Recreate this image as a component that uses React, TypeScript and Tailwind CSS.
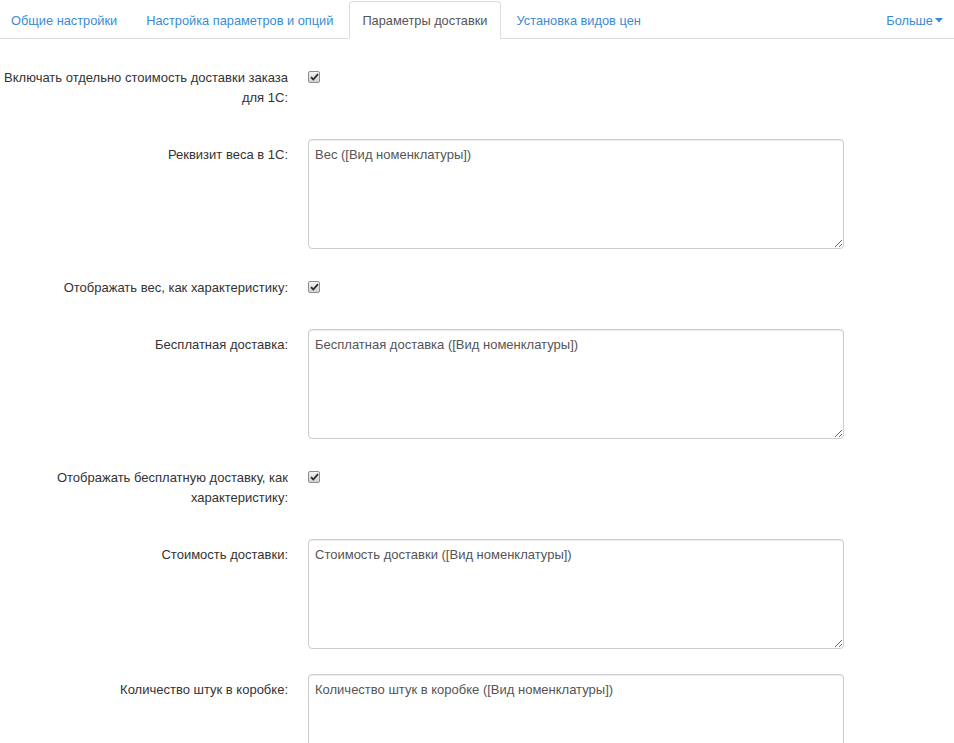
import React from 'react'

const tabs = [
    { title: 'Общие настройки' },
    { title: 'Настройка параметров и опций' },
    { title: 'Параметры доставки', active: true },
    { title: 'Установка видов цен' },
]

function Check() {
    return (
        <span className="mt-[7px] flex h-[12px] w-[12px] items-center justify-center rounded-[2px] border border-[#8e8e8e] bg-gradient-to-b from-[#f4f4f4] to-[#d2d2d2]">
            <svg width="9" height="8" viewBox="0 0 9 8">
                <path d="M1 4.2 L3.3 6.5 L8 1.2" fill="none" stroke="#2a2a2a" strokeWidth="1.8" />
            </svg>
        </span>
    )
}

function CheckRow(props: { label: string }) {
    return (
        <div className="mb-[26px] grid grid-cols-[288px_536px] gap-x-5">
            <label className="pl-[4px] pt-[4px] pb-[5px] text-right leading-[20px] text-[#333]">{props.label}</label>
            <div>
                <Check />
            </div>
        </div>
    )
}

function AreaRow(props: { label: string; value: string }) {
    return (
        <div className="mb-[25px] grid grid-cols-[288px_536px] gap-x-5">
            <label className="pl-[4px] pt-[6px] text-right leading-[20px] text-[#333]">{props.label}</label>
            <textarea
                className="h-[110px] w-[536px] resize-y rounded-[4px] border border-[#ccc] px-[6px] py-[5px] leading-[20px] text-[#555] shadow-[inset_0_1px_1px_rgba(0,0,0,0.075)] outline-none"
                defaultValue={props.value}
            />
        </div>
    )
}

export default function App() {
    return (
        <div className="min-h-screen bg-white text-[13px] font-['Liberation_Sans',Arial,sans-serif]">
            <div className="flex border-b border-[#ddd] pt-px text-[12.8px]">
                <div className="-ml-[2px] flex">
                    {tabs.map((t) => (
                        <a
                            key={t.title}
                            className={
                                t.active
                                    ? '-mb-px mr-[3px] rounded-t-[4px] border border-[#ddd] border-b-white bg-white px-[12px] pt-[10px] pb-[8px] leading-[17px] text-[#555]'
                                    : 'mr-[3px] border border-transparent px-[12px] pt-[10px] pb-[8px] leading-[17px] text-[#3a8bd4]'
                            }
                        >
                            {t.title}
                        </a>
                    ))}
                </div>
                <a className="ml-auto flex items-center gap-[2px] border border-transparent pr-[10px] pt-[10px] pb-[8px] leading-[17px] text-[#3a8bd4]">
                    Больше
                    <svg width="8" height="5" viewBox="0 0 8 5">
                        <path d="M0 0 L8 0 L4 4.5 Z" fill="#3a8bd4" />
                    </svg>
                </a>
            </div>
            <div className="pt-[25px]">
                <CheckRow label="Включать отдельно стоимость доставки заказа для 1С:" />
                <AreaRow label="Реквизит веса в 1С:" value="Вес ([Вид номенклатуры])" />
                <CheckRow label="Отображать вес, как характеристику:" />
                <AreaRow label="Бесплатная доставка:" value="Бесплатная доставка ([Вид номенклатуры])" />
                <CheckRow label="Отображать бесплатную доставку, как характеристику:" />
                <AreaRow label="Стоимость доставки:" value="Стоимость доставки ([Вид номенклатуры])" />
                <AreaRow label="Количество штук в коробке:" value="Количество штук в коробке ([Вид номенклатуры])" />
            </div>
        </div>
    )
}
